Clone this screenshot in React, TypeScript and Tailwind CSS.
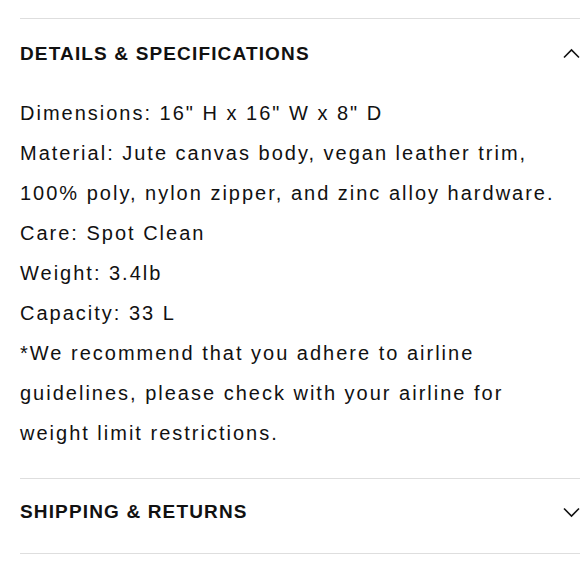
import React from 'react';

function Chevron({ up }: { up?: boolean }) {
    return (
        <svg width="17" height="11" viewBox="0 0 17 11" fill="none" className="shrink-0">
            {up ? (
                <path d="M1 9.5 L8.5 2 L16 9.5" stroke="#111" strokeWidth="1.6" />
            ) : (
                <path d="M1 1.5 L8.5 9 L16 1.5" stroke="#111" strokeWidth="1.6" />
            )}
        </svg>
    );
}

const details = [
    'Dimensions: 16" H x 16" W x 8" D',
    'Material: Jute canvas body, vegan leather trim,',
    '100% poly, nylon zipper, and zinc alloy hardware.',
    'Care: Spot Clean',
    'Weight: 3.4lb',
    'Capacity: 33 L',
    '*We recommend that you adhere to airline',
    'guidelines, please check with your airline for',
    'weight limit restrictions.',
];

export default function App() {
    return (
        <div className="w-[580px] h-[580px] bg-white pl-5 pt-[18px] overflow-hidden text-[#111]" style={{ fontFamily: '"Liberation Sans", Arial, sans-serif' }}>
            <div className="border-t border-[#dedede]">
                <div className="flex items-center justify-between pt-[22px] h-[47px]">
                    <h2 className="text-[19px] leading-6 font-bold tracking-[1.15px]">DETAILS &amp; SPECIFICATIONS</h2>
                    <Chevron up />
                </div>
                <div className="pt-[27px] pb-[25px] text-[20px] leading-10 tracking-[2px] whitespace-nowrap">
                    {details.map((line) => (
                        <p key={line}>{line}</p>
                    ))}
                </div>
            </div>
            <div className="border-t border-b border-[#dedede]">
                <div className="flex items-center justify-between pt-[21px] pb-[29px]">
                    <h2 className="text-[19px] leading-6 font-bold tracking-[1.15px]">SHIPPING &amp; RETURNS</h2>
                    <Chevron />
                </div>
            </div>
        </div>
    );
}
